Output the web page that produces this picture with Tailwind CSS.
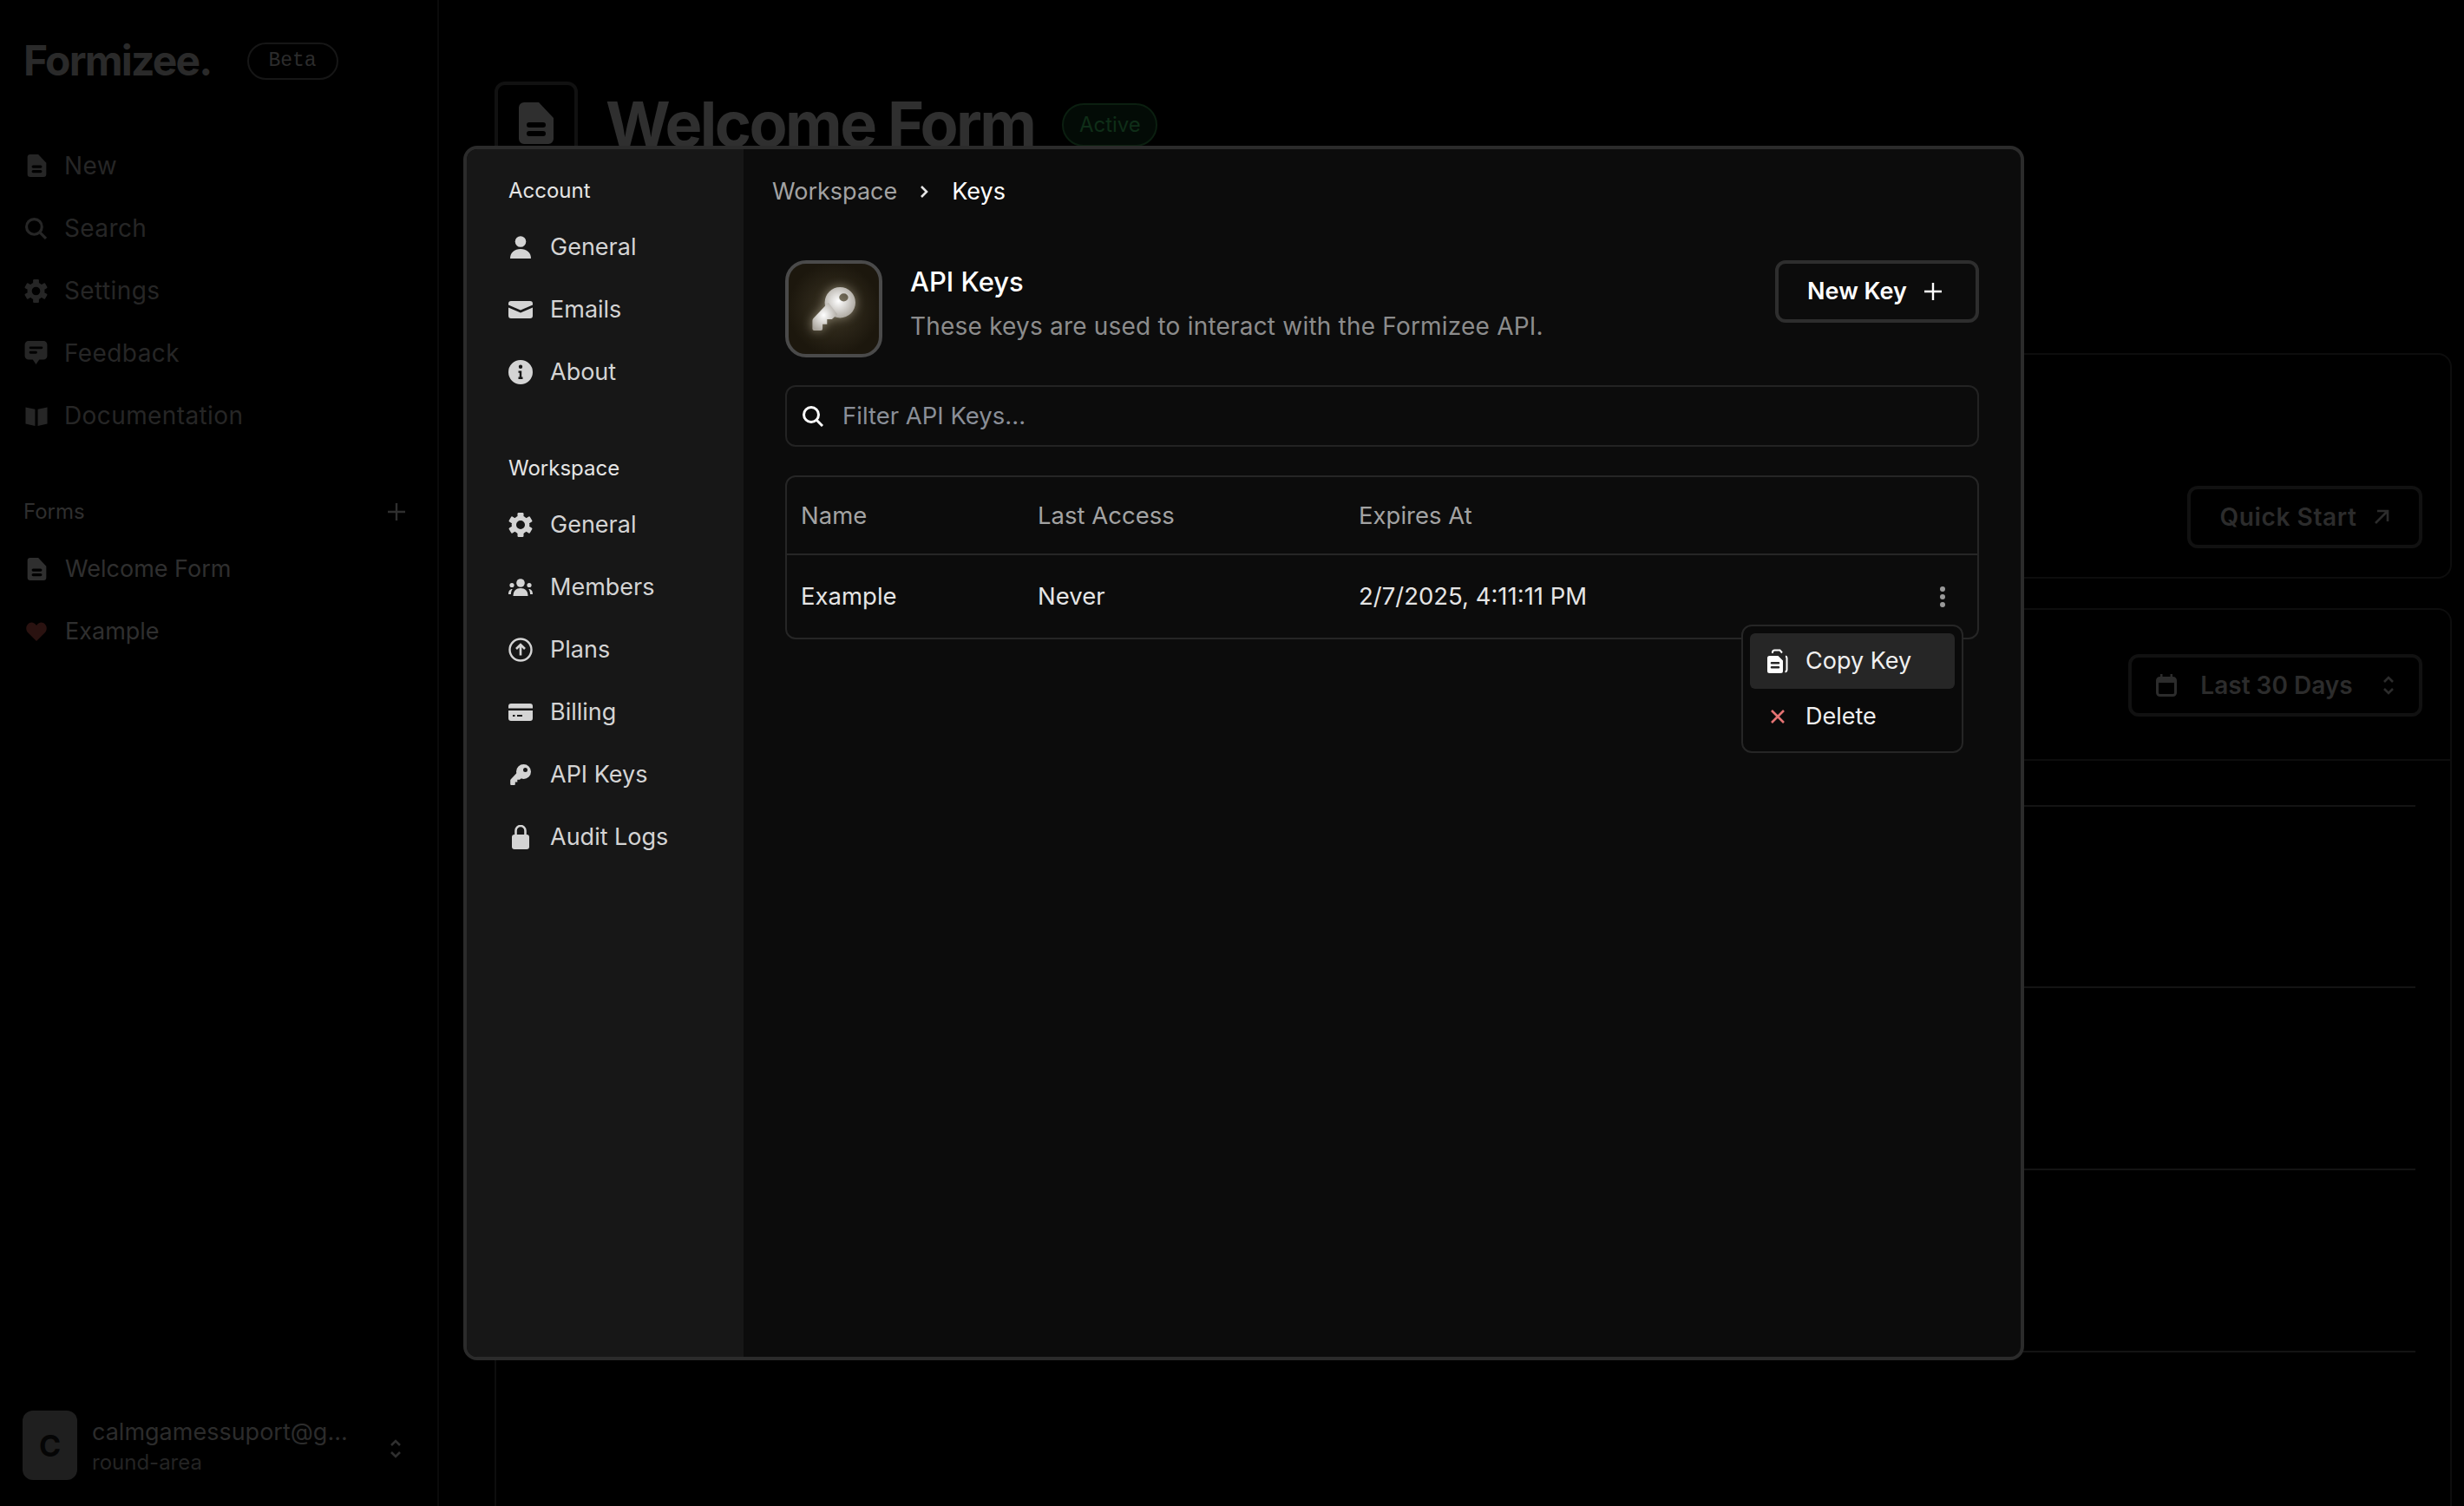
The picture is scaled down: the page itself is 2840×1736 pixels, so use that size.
<!DOCTYPE html>
<html lang="en">
<head>
    <meta charset="UTF-8">
    <meta content="width=device-width, initial-scale=1.0" name="viewport">
    <title>Formizee - API Keys</title>
    <script src="https://cdn.jsdelivr.net/npm/@tailwindcss/browser@4"></script>
</head>
<body class="relative w-[2840px] h-[1736px] overflow-hidden bg-black font-[family-name:Inter,sans-serif]">
    <!-- icon sprites -->
    <svg class="hidden">
        <symbol id="doc" viewBox="0 0 20 24"><path fill="currentColor" fill-rule="evenodd" d="M3 0h8.5L20 9v12a3 3 0 0 1-3 3H3a3 3 0 0 1-3-3V3a3 3 0 0 1 3-3zM6 11.500a1.500 1.500 0 0 0 0 3h8a1.500 1.500 0 0 0 0-3zM6 16.500a1.500 1.500 0 0 0 0 3h8a1.500 1.500 0 0 0 0-3z"/></symbol>
        <symbol id="search" viewBox="0 0 24 24"><circle cx="10" cy="10" r="8.500" fill="none" stroke="currentColor" stroke-width="3"/><path d="M16.500 16.500 23 23" stroke="currentColor" stroke-width="3"/></symbol>
        <symbol id="gear" viewBox="0 0 24 24"><circle cx="12" cy="12" r="6.600" fill="none" stroke="currentColor" stroke-width="4.600"/><g fill="currentColor"><rect x="9" y="0" width="6" height="6" rx="1"/><rect x="9" y="0" width="6" height="6" rx="1" transform="rotate(60 12 12)"/><rect x="9" y="0" width="6" height="6" rx="1" transform="rotate(120 12 12)"/><rect x="9" y="0" width="6" height="6" rx="1" transform="rotate(180 12 12)"/><rect x="9" y="0" width="6" height="6" rx="1" transform="rotate(240 12 12)"/><rect x="9" y="0" width="6" height="6" rx="1" transform="rotate(300 12 12)"/></g></symbol>
        <symbol id="chat" viewBox="0 0 24 26"><path fill="currentColor" fill-rule="evenodd" d="M4 0h16a4 4 0 0 1 4 4v12a4 4 0 0 1-4 4h-4.500l-3.500 5-3.500-5H4a4 4 0 0 1-4-4V4a4 4 0 0 1 4-4zM6 6a1.300 1.300 0 0 0 0 2.600h12A1.300 1.300 0 0 0 18 6zM6 11a1.300 1.300 0 0 0 0 2.600h6a1.300 1.300 0 0 0 0-2.600z"/></symbol>
        <symbol id="book" viewBox="0 0 24 22"><path fill="currentColor" d="M0 1.500 10.500 3.500V22L0 19.500zM24 1.500 13.500 3.500V22L24 19.500z"/></symbol>
        <symbol id="plus" viewBox="0 0 20 20"><path d="M10 0v20M0 10h20" stroke="currentColor" stroke-width="2.400"/></symbol>
        <symbol id="updown" viewBox="0 0 14 24"><path d="M2 8l5-5 5 5M2 16l5 5 5-5" fill="none" stroke="currentColor" stroke-width="2.600"/></symbol>
        <symbol id="user" viewBox="0 0 24 26"><circle cx="12" cy="6.500" r="6.300" fill="currentColor"/><path fill="currentColor" d="M0 26c0-7 5-11 12-11s12 4 12 11z"/></symbol>
        <symbol id="mail" viewBox="0 0 28 20"><path fill="currentColor" d="M3 0h22a3 3 0 0 1 3 3v1.500L14 10.500 0 4.500V3a3 3 0 0 1 3-3zM0 7.500l14 6 14-6V17a3 3 0 0 1-3 3H3a3 3 0 0 1-3-3z"/></symbol>
        <symbol id="info" viewBox="0 0 28 28"><path fill="currentColor" fill-rule="evenodd" d="M14 0a14 14 0 1 1 0 28 14 14 0 0 1 0-28zM14 5.500a2.200 2.200 0 1 0 0 4.400 2.200 2.200 0 0 0 0-4.400zM11.500 12.500v2.200h1.300v4.800h-1.300V22h5v-2.500h-1.300v-7z"/></symbol>
        <symbol id="members" viewBox="0 0 28 20"><g fill="currentColor"><circle cx="14" cy="5" r="4.800"/><path d="M5.500 20c0-6 3.500-9 8.500-9s8.500 3 8.500 9z"/><circle cx="4" cy="7.500" r="2.600"/><circle cx="24" cy="7.500" r="2.600"/><path d="M0 18c0-3.500 1.500-6 4.700-6-1.200 1.800-1.700 3.600-1.800 6zM28 18c0-3.500-1.500-6-4.700-6 1.200 1.800 1.700 3.600 1.800 6z"/></g></symbol>
        <symbol id="plans" viewBox="0 0 28 28"><circle cx="14" cy="14" r="12.500" fill="none" stroke="currentColor" stroke-width="2.400"/><path d="M14 20.500V8.500M9 13l5-5 5 5" fill="none" stroke="currentColor" stroke-width="2.600"/></symbol>
        <symbol id="card" viewBox="0 0 28 20"><path fill="currentColor" fill-rule="evenodd" d="M3 0h22a3 3 0 0 1 3 3v2.500H0V3a3 3 0 0 1 3-3zM0 8h28v9a3 3 0 0 1-3 3H3a3 3 0 0 1-3-3zM5 13v2h2.500v-2zM10 13v2h6v-2z"/></symbol>
        <symbol id="key" viewBox="0 0 24 24"><path fill="currentColor" fill-rule="evenodd" d="M15.500 0a8.500 8.500 0 1 1 0 17 8.500 8.500 0 0 1 0-17zM17.500 4a2.500 2.500 0 1 0 0 5 2.500 2.500 0 0 0 0-5z"/><path fill="currentColor" d="M9 8.500.8 17.200a2 2 0 0 0-.6 1.400V23a1 1 0 0 0 1 1h3.600a1 1 0 0 0 1-1v-2.500h2.500v-2.700h2.700l3-2.800z"/></symbol>
        <symbol id="lock" viewBox="0 0 20 28"><path fill="currentColor" d="M3 11h14a3 3 0 0 1 3 3v11a3 3 0 0 1-3 3H3a3 3 0 0 1-3-3V14a3 3 0 0 1 3-3z"/><path d="M4.500 12V6.500a5.500 5.500 0 0 1 11 0V12" fill="none" stroke="currentColor" stroke-width="2.600"/></symbol>
        <symbol id="copy" viewBox="0 0 24 28"><path fill="currentColor" fill-rule="evenodd" d="M2.500 8h10L18 13.500V25.500a2.500 2.500 0 0 1-2.500 2.500h-13A2.500 2.500 0 0 1 0 25.500v-15A2.500 2.500 0 0 1 2.500 8zM5 15a1.300 1.300 0 0 0 0 2.600h8a1.300 1.300 0 0 0 0-2.600zM5 20a1.300 1.300 0 0 0 0 2.600h8a1.300 1.300 0 0 0 0-2.600z"/><path d="M6 5V4a2.500 2.500 0 0 1 2.500-2.500h6L17 4.500M21 8.500a2 2 0 0 1 1.500 2V24a2.500 2.500 0 0 1-2 2.500" fill="none" stroke="currentColor" stroke-width="2"/></symbol>
    </svg>

    <div class="flex h-full">
        <!-- dimmed app sidebar -->
        <aside class="flex flex-col w-[506px] h-full border-r-2 border-[#0b0b0b] text-[#262626] text-[28px]">
            <div class="flex items-center h-[154px] pl-[27px] pb-[14px]">
                <span class="text-[48px] font-bold tracking-[-1.8px] text-[#2a2a2a]">Formizee.</span>
                <span class="flex items-center justify-center ml-[41px] w-[105px] h-[43px] rounded-full border-2 border-[#161616] font-[family-name:'Liberation_Mono',monospace] text-[23px] text-[#2c2c2c]">Beta</span>
            </div>
            <nav class="flex flex-col tracking-[0.4px] pt-[1px]">
                <a class="flex items-center h-[72px] pl-[31px] gap-[20px]"><svg class="w-[23px] h-[26px]"><use href="#doc"/></svg>New</a>
                <a class="flex items-center h-[72px] pl-[29px] gap-[20px]"><svg class="w-[25px] h-[25px]"><use href="#search"/></svg>Search</a>
                <a class="flex items-center h-[72px] pl-[28px] gap-[19px]"><svg class="w-[27px] h-[27px]"><use href="#gear"/></svg>Settings</a>
                <a class="flex items-center h-[72px] pl-[28px] gap-[19px]"><svg class="w-[27px] h-[28px]"><use href="#chat"/></svg>Feedback</a>
                <a class="flex items-center h-[72px] pl-[29px] gap-[19px]"><svg class="w-[26px] h-[23px]"><use href="#book"/></svg>Documentation</a>
            </nav>
            <div class="flex items-center justify-between mt-[59px] h-[32px] pl-[27px] pr-[37px] text-[24px] text-[#2f2f2f]">
                <span>Forms</span>
                <svg class="w-[20px] h-[20px]"><use href="#plus"/></svg>
            </div>
            <nav class="flex flex-col mt-[14px] text-[27px] text-[#2f2f2f]">
                <a class="flex items-center h-[72px] pl-[31px] gap-[21px]"><svg class="w-[23px] h-[26px]"><use href="#doc"/></svg>Welcome Form</a>
                <a class="flex items-center h-[72px] pl-[30px] gap-[21px]"><svg class="w-[24px] h-[22px] text-[#2a1210]" viewBox="0 0 24 22"><path fill="currentColor" d="M12 22 2 12C-1 8.500 0 3 4 1c3-1.500 6 0 8 3 2-3 5-4.500 8-3 4 2 5 7.500 2 11z"/></svg>Example</a>
            </nav>
            <div class="flex items-center mt-auto mb-[30px] pl-[26px]">
                <div class="flex items-center justify-center w-[63px] h-[80px] rounded-[12px] bg-[#1f1f1f] text-[34px] font-bold text-[#050505]">C</div>
                <div class="flex flex-col ml-[17px] pt-[3px] w-[300px]">
                    <span class="text-[27px] leading-[36px] text-[#2c2c2c]">calmgamessuport@g...</span>
                    <span class="text-[24px] leading-[34px] text-[#242424]">round-area</span>
                </div>
                <svg class="w-[14px] h-[24px] ml-[43px] mt-[8px] text-[#2f2f2f]"><use href="#updown"/></svg>
            </div>
        </aside>

        <!-- dimmed page behind the modal -->
        <main class="flex-1 pl-[64px] pr-[14px]">
            <div class="flex items-center h-[96px] mt-[94px]">
                <div class="flex items-center justify-center w-[96px] h-[96px] rounded-[12px] border-4 border-[#111111] text-[#2f2f2f]">
                    <svg class="w-[44px] h-[48px]"><use href="#doc"/></svg>
                </div>
                <h1 class="ml-[32px] mt-[2px] text-[72px] font-bold tracking-[-2.6px] text-[#2f2f2f]">Welcome Form</h1>
                <span class="flex items-center justify-center ml-[32px] mt-[4px] w-[110px] h-[50px] rounded-full border-2 border-[#0b1f10] bg-[#030b06] text-[24px] text-[#0f2e18]">Active</span>
            </div>
            <section class="flex items-end justify-end h-[260px] mt-[217px] pr-[32px] pb-[33px] rounded-[16px] border-2 border-[#0d0d0d]">
                <a class="flex items-center justify-center gap-[20px] w-[271px] h-[72px] rounded-[12px] border-4 border-[#111111] text-[28px] font-semibold tracking-[0.6px] text-[#2c2c2c]">Quick Start
                    <svg class="w-[18px] h-[18px]" viewBox="0 0 18 18"><path d="M2 16 16 2M4 2h12v12" fill="none" stroke="currentColor" stroke-width="2.600"/></svg>
                </a>
            </section>
            <section class="h-[1100px] mt-[34px] rounded-t-[16px] border-2 border-[#0d0d0d]">
                <div class="flex items-center justify-end h-[174px] pt-[2px] pr-[32px] border-b-2 border-[#0d0d0d]">
                    <a class="flex items-center justify-center w-[339px] h-[72px] rounded-[12px] border-4 border-[#111111] text-[28px] font-semibold text-[#2c2c2c]">
                        <svg class="w-[24px] h-[26px] mr-[27px]" viewBox="0 0 24 26"><rect x="1.500" y="4.500" width="21" height="20" rx="3" fill="none" stroke="currentColor" stroke-width="3"/><path fill="currentColor" d="M1.500 5h21v5h-21zM5 0h2.500v5H5zM16.500 0H19v5h-2.500z"/></svg>
                        Last 30 Days
                        <svg class="w-[14px] h-[24px] ml-[34px]"><use href="#updown"/></svg>
                    </a>
                </div>
                <div class="flex flex-col mr-[40px] mt-[51px]">
                    <div class="h-[2px] bg-[#141414]"></div>
                    <div class="h-[2px] mt-[207px] bg-[#141414]"></div>
                    <div class="h-[2px] mt-[208px] bg-[#141414]"></div>
                    <div class="h-[2px] mt-[208px] bg-[#141414]"></div>
                </div>
            </section>
        </main>
    </div>

    <!-- settings modal -->
    <div class="absolute left-[534px] top-[168px] flex w-[1799px] h-[1400px] rounded-[16px] border-4 border-[#2b2b2b] bg-[#0c0c0c] overflow-hidden">
        <aside class="w-[319px] h-full pt-[32px] pl-[48px] bg-[#171717] text-[27px] text-[#d4d4d4]">
            <h3 class="flex items-center h-[32px] text-[24px] text-[#e5e5e5]">Account</h3>
            <nav class="flex flex-col mt-[13px]">
                <a class="flex items-center h-[72px]"><span class="flex justify-center w-[28px] mr-[20px]"><svg class="w-[24px] h-[26px]"><use href="#user"/></svg></span>General</a>
                <a class="flex items-center h-[72px]"><span class="flex justify-center w-[28px] mr-[20px]"><svg class="w-[28px] h-[20px]"><use href="#mail"/></svg></span>Emails</a>
                <a class="flex items-center h-[72px]"><span class="flex justify-center w-[28px] mr-[20px]"><svg class="w-[28px] h-[28px]"><use href="#info"/></svg></span>About</a>
            </nav>
            <h3 class="flex items-center h-[32px] mt-[59px] text-[24px] text-[#e5e5e5]">Workspace</h3>
            <nav class="flex flex-col mt-[13px]">
                <a class="flex items-center h-[72px]"><span class="flex justify-center w-[28px] mr-[20px]"><svg class="w-[28px] h-[28px]"><use href="#gear"/></svg></span>General</a>
                <a class="flex items-center h-[72px]"><span class="flex justify-center w-[28px] mr-[20px]"><svg class="w-[28px] h-[20px]"><use href="#members"/></svg></span>Members</a>
                <a class="flex items-center h-[72px]"><span class="flex justify-center w-[28px] mr-[20px]"><svg class="w-[28px] h-[28px]"><use href="#plans"/></svg></span>Plans</a>
                <a class="flex items-center h-[72px]"><span class="flex justify-center w-[28px] mr-[20px]"><svg class="w-[28px] h-[20px]"><use href="#card"/></svg></span>Billing</a>
                <a class="flex items-center h-[72px]"><span class="flex justify-center w-[28px] mr-[20px]"><svg class="w-[24px] h-[24px]"><use href="#key"/></svg></span>API Keys</a>
                <a class="flex items-center h-[72px]"><span class="flex justify-center w-[28px] mr-[20px]"><svg class="w-[20px] h-[28px]"><use href="#lock"/></svg></span>Audit Logs</a>
            </nav>
        </aside>

        <div class="flex-1 pt-[33px]">
            <div class="flex items-center h-[32px] pl-[33px] text-[27px]">
                <span class="text-[#a3a3a3]">Workspace</span>
                <svg class="w-[10px] h-[16px] ml-[26px] mr-[27px] text-[#e5e5e5]" viewBox="0 0 10 16"><path d="M2 2l6 6-6 6" fill="none" stroke="currentColor" stroke-width="2.600"/></svg>
                <span class="text-white">Keys</span>
            </div>

            <div class="px-[48px] mt-[63px]">
                <div class="flex">
                    <div class="flex items-center justify-center w-[112px] h-[112px] rounded-[24px] border-4 border-[#4a4a4a] bg-[radial-gradient(circle,#3b3424_0%,#1c170d_72%)]">
                        <svg class="w-[50px] h-[50px] drop-shadow-[0_0_6px_#8a8370]" viewBox="0 0 24 24">
                            <defs><radialGradient id="keyShine" cx="45%" cy="45%" r="60%"><stop offset="0" stop-color="#ffffff"/><stop offset="1" stop-color="#a9a49c"/></radialGradient></defs>
                            <path fill="url(#keyShine)" fill-rule="evenodd" d="M15.500 0a8.500 8.500 0 1 1 0 17 8.500 8.500 0 0 1 0-17zM17.500 3.500a2.500 2.200 0 1 0 0 4.400 2.500 2.200 0 0 0 0-4.400z"/>
                            <path fill="url(#keyShine)" d="M9 8.500.8 17.200a2 2 0 0 0-.6 1.400V23a1 1 0 0 0 1 1h3.600a1 1 0 0 0 1-1v-2.500h2.500v-2.700h2.700l3-2.800z"/>
                        </svg>
                    </div>
                    <div class="flex flex-col ml-[32px] pt-[6px]">
                        <h2 class="text-[31px] leading-[38px] font-medium text-white">API Keys</h2>
                        <p class="mt-[14px] text-[28px] leading-[36px] tracking-[0.2px] text-[#8c8c8c]">These keys are used to interact with the Formizee API.</p>
                    </div>
                    <button class="flex items-center justify-center gap-[20px] ml-auto pr-[6px] w-[235px] h-[72px] rounded-[12px] border-4 border-[#2e2e2e] text-[27px] font-semibold text-white">New Key
                        <svg class="w-[20px] h-[20px]"><use href="#plus"/></svg>
                    </button>
                </div>

                <div class="flex items-center h-[71px] mt-[32px] pl-[18px] rounded-[12px] border-2 border-[#232323]">
                    <svg class="w-[24px] h-[24px] text-white"><use href="#search"/></svg>
                    <span class="ml-[22px] pt-[1px] text-[27.5px] text-[#8a8f98]">Filter API Keys...</span>
                </div>

                <div class="relative mt-[33px] rounded-[12px] border-2 border-[#262626] text-[27.5px]">
                    <div class="flex items-center h-[90px] pl-[16px] pt-[1px] border-b-2 border-[#262626] text-[#a3a3a3]">
                        <span class="w-[273px]">Name</span>
                        <span class="w-[370px]">Last Access</span>
                        <span>Expires At</span>
                    </div>
                    <div class="flex items-center h-[95px] pl-[16px] text-[#e5e5e5]">
                        <span class="w-[273px] pt-[1px]">Example</span>
                        <span class="w-[370px] pt-[1px]">Never</span>
                        <span class="pt-[1px]">2/7/2025, 4:11:11 PM</span>
                        <span class="flex flex-col gap-[3px] ml-auto mr-[37px]">
                            <i class="w-[6px] h-[6px] rounded-full bg-[#9a9a9a]"></i>
                            <i class="w-[6px] h-[6px] rounded-full bg-[#9a9a9a]"></i>
                            <i class="w-[6px] h-[6px] rounded-full bg-[#9a9a9a]"></i>
                        </span>
                    </div>

                    <div class="absolute left-[1100px] top-[170px] w-[256px] h-[148px] p-[8px] rounded-[12px] border-2 border-[#262626] bg-[#0a0a0a] text-[27px] text-[#f0f0f0]">
                        <a class="flex items-center h-[64px] pl-[20px] rounded-[6px] bg-[#262626]">
                            <svg class="w-[24px] h-[28px] mr-[20px] text-white"><use href="#copy"/></svg>Copy Key
                        </a>
                        <a class="flex items-center h-[64px] pl-[24px]">
                            <svg class="w-[16px] h-[16px] mr-[24px] text-[#e57373]" viewBox="0 0 16 16"><path d="M1 1l14 14M15 1 1 15" stroke="currentColor" stroke-width="2.600"/></svg>Delete
                        </a>
                    </div>
                </div>
            </div>
        </div>
    </div>
</body>
</html>
